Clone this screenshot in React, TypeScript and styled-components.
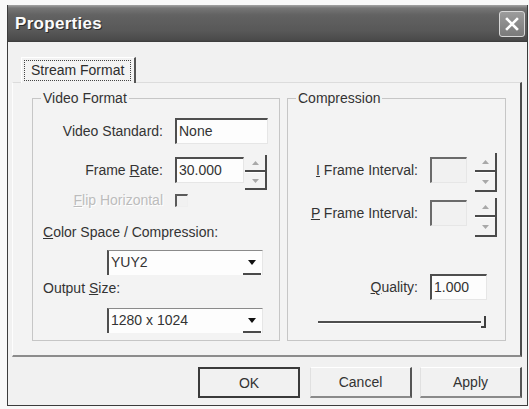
import React from 'react';
import styled, {createGlobalStyle} from 'styled-components';

const GlobalStyle = createGlobalStyle`
  html, body {
    margin: 0;
    padding: 0;
    background: #f8f8f8;
  }
  body {
    font-family: "Liberation Sans", Arial, sans-serif;
    font-size: 14px;
    color: #2e2e2e;
  }
`;

const SpinArrow: React.FC<{up?: boolean}> = ({up}) => (
  <svg width="7" height="4" viewBox="0 0 7 4">
    <path d={up ? 'M0 4 L3.5 0 L7 4 Z' : 'M0 0 L3.5 4 L7 0 Z'} fill="#a8a8a8" />
  </svg>
);

const DropArrow: React.FC = () => (
  <svg width="8" height="5" viewBox="0 0 8 5">
    <path d="M0 0 L8 0 L4 5 Z" fill="#111" />
  </svg>
);

const CloseGlyph: React.FC = () => (
  <svg width="14" height="14" viewBox="0 0 14 14">
    <path d="M2 2 L12 12 M12 2 L2 12" stroke="#fff" strokeWidth="2.6" strokeLinecap="square" />
  </svg>
);

export default function App() {
  return (
    <>
      <GlobalStyle />
      <Window>
        <TitleBar>
          <Title>Properties</Title>
          <CloseButton>
            <CloseGlyph />
          </CloseButton>
        </TitleBar>

        <Body>
          <TabStrip>
            <Tab>
              <FocusRect>Stream Format</FocusRect>
            </Tab>
          </TabStrip>

          <Panel>
            <Group $w={248}>
              <Legend>Video Format</Legend>

              <Row>
                <Label>Video Standard:</Label>
                <TextBox $w={93}>None</TextBox>
              </Row>

              <Row $mt={13}>
                <Label>
                  Frame <u>R</u>ate:
                </Label>
                <Field>
                  <TextBox $w={69}>30.000</TextBox>
                  <Spinner $h={35} $top={-2}>
                    <SpinButton>
                      <SpinArrow up />
                    </SpinButton>
                    <SpinButton $last>
                      <SpinArrow />
                    </SpinButton>
                  </Spinner>
                </Field>
              </Row>

              <Row $mt={9}>
                <Label $disabled>
                  <u>F</u>lip Horizontal
                </Label>
                <CheckBox />
              </Row>

              <PlainLabel $mt={16}>
                <u>C</u>olor Space / Compression:
              </PlainLabel>
              <Combo $mt={10}>
                <ComboText>YUY2</ComboText>
                <DropButton>
                  <DropArrow />
                </DropButton>
              </Combo>

              <PlainLabel $mt={5}>
                Output <u>S</u>ize:
              </PlainLabel>
              <Combo $mt={12}>
                <ComboText>1280 x 1024</ComboText>
                <DropButton>
                  <DropArrow />
                </DropButton>
              </Combo>
            </Group>

            <Group $w={219}>
              <Legend>Compression</Legend>

              <Row $mt={39}>
                <Label>
                  <u>I</u> Frame Interval:
                </Label>
                <Field $gap={8}>
                  <TextBox $w={37} $disabled />
                  <Spinner $h={39} $top={-4}>
                    <SpinButton>
                      <SpinArrow up />
                    </SpinButton>
                    <SpinButton $last>
                      <SpinArrow />
                    </SpinButton>
                  </Spinner>
                </Field>
              </Row>

              <Row $mt={17}>
                <Label>
                  <u>P</u> Frame Interval:
                </Label>
                <Field $gap={8}>
                  <TextBox $w={37} $disabled />
                  <Spinner $h={39} $top={-2}>
                    <SpinButton>
                      <SpinArrow up />
                    </SpinButton>
                    <SpinButton $last>
                      <SpinArrow />
                    </SpinButton>
                  </Spinner>
                </Field>
              </Row>

              <Row $mt={48}>
                <Label>
                  <u>Q</u>uality:
                </Label>
                <TextBox $w={57}>1.000</TextBox>
              </Row>

              <Slider>
                <Track />
                <Thumb />
              </Slider>
            </Group>
          </Panel>

          <ButtonRow>
            <Button $default>OK</Button>
            <Button>Cancel</Button>
            <Button>Apply</Button>
          </ButtonRow>
        </Body>
      </Window>
    </>
  );
}

const Window = styled.div`
  margin: 5px 0 0 7px;
  width: 521px;
  height: 401px;
  box-sizing: border-box;
  display: flex;
  flex-direction: column;
  background: #f1f1f1;
  border-left: 1px solid #3c3c3c;
  border-right: 1px solid #3c3c3c;
  border-bottom: 1px solid #3c3c3c;
`;

const TitleBar = styled.div`
  flex: none;
  height: 37px;
  display: flex;
  align-items: center;
  justify-content: space-between;
  padding: 0 2px 0 7px;
  background: linear-gradient(
    to bottom,
    #a4a4a4 0,
    #767676 3px,
    #626262 10px,
    #585858 26px,
    #4a4a4a 35px,
    #3a3a3a 37px
  );
`;

const Title = styled.span`
  font-family: "Liberation Sans", Arial, sans-serif;
  font-weight: bold;
  font-size: 17px;
  letter-spacing: 0.3px;
  color: #fbfbfb;
  text-shadow: 1px 1px 0 #2a2a2a;
`;

const CloseButton = styled.div`
  width: 26px;
  height: 26px;
  box-sizing: border-box;
  border: 1px solid #d8d8d8;
  border-radius: 3px;
  background: linear-gradient(to bottom, #9c9c9c, #7a7a7a);
  display: flex;
  align-items: center;
  justify-content: center;
`;

const Body = styled.div`
  flex: 1;
  padding: 15px 5px 0 4px;
`;

const TabStrip = styled.div`
  display: flex;
  padding-left: 9px;
`;

const Tab = styled.div`
  position: relative;
  z-index: 1;
  margin-bottom: -1px;
  height: 26px;
  box-sizing: border-box;
  padding: 2px 3px 2px 2px;
  background: #f3f3f3;
  border-top: 1px solid #fff;
  border-left: 1px solid #fff;
  border-right: 2px solid #555;
`;

const FocusRect = styled.div`
  height: 21px;
  box-sizing: border-box;
  padding: 0 6px;
  line-height: 19px;
  border: 1px dotted #444;
`;

const Panel = styled.div`
  height: 275px;
  box-sizing: border-box;
  display: flex;
  gap: 7px;
  padding: 7px 14px 14px 19px;
  background: #f3f3f3;
  border-top: 1px solid #dcdcdc;
  border-left: 1px solid #fdfdfd;
  border-right: 2px solid #4c4c4c;
  border-bottom: 2px solid #8c8c8c;
`;

const Group = styled.fieldset<{$w: number}>`
  flex: none;
  width: ${(p) => p.$w}px;
  min-width: 0;
  margin: 0;
  padding: 12px 0 0 0;
  box-sizing: border-box;
  border: 1px solid #c6c6c6;
  display: flex;
  flex-direction: column;
`;

const Legend = styled.legend`
  margin-left: 8px;
  padding: 0 2px;
  line-height: 16px;
  color: #333;
`;

const Row = styled.div<{$mt?: number}>`
  display: grid;
  grid-template-columns: 130px auto;
  column-gap: 12px;
  align-items: center;
  justify-items: start;
  margin-top: ${(p) => p.$mt ?? 0}px;
`;

const Label = styled.span<{$disabled?: boolean}>`
  justify-self: end;
  line-height: 16px;
  white-space: nowrap;
  color: ${(p) => (p.$disabled ? '#bcbcbc' : '#333')};
  text-shadow: ${(p) => (p.$disabled ? '1px 1px 0 #fff' : 'none')};
`;

const PlainLabel = styled.span<{$mt: number}>`
  margin-top: ${(p) => p.$mt}px;
  padding-left: 10px;
  line-height: 16px;
  white-space: nowrap;
  color: #333;
`;

const Field = styled.div<{$gap?: number}>`
  display: flex;
  align-items: flex-start;
  gap: ${(p) => p.$gap ?? 1}px;
`;

const TextBox = styled.div<{$w: number; $disabled?: boolean}>`
  width: ${(p) => p.$w}px;
  height: 26px;
  box-sizing: border-box;
  padding-left: 2px;
  line-height: 23px;
  white-space: nowrap;
  background: ${(p) => (p.$disabled ? '#f1f1f1' : '#fdfdfd')};
  border-top: 2px solid ${(p) => (p.$disabled ? '#6a6a6a' : '#4e4e4e')};
  border-left: 2px solid ${(p) => (p.$disabled ? '#6a6a6a' : '#4e4e4e')};
  border-right: 1px solid #e6e6e6;
  border-bottom: 1px solid #e6e6e6;
  color: #333;
`;

const Spinner = styled.div<{$h: number; $top: number}>`
  width: 22px;
  height: ${(p) => p.$h}px;
  margin-top: ${(p) => p.$top}px;
  margin-bottom: ${(p) => 26 - p.$h - p.$top}px;
  box-sizing: border-box;
  display: flex;
  flex-direction: column;
  border-right: 2px solid #4a4a4a;
`;

const SpinButton = styled.div<{$last?: boolean}>`
  flex: 1;
  display: flex;
  align-items: center;
  justify-content: center;
  border-bottom: 2px solid #4a4a4a;
  border-top: ${(p) => (p.$last ? '1px solid #fff' : 'none')};
`;

const CheckBox = styled.div`
  width: 13px;
  height: 13px;
  box-sizing: border-box;
  border-top: 2px solid #5a5a5a;
  border-left: 2px solid #5a5a5a;
  border-right: 1px solid #efefef;
  border-bottom: 1px solid #efefef;
  background: #f1f1f1;
`;

const Combo = styled.div<{$mt: number}>`
  margin-top: ${(p) => p.$mt}px;
  margin-left: 74px;
  width: 156px;
  height: 25px;
  box-sizing: border-box;
  display: flex;
  background: #fdfdfd;
  border-top: 1px solid #8a8a8a;
  border-left: 2px solid #4e4e4e;
  border-right: 1px solid #e6e6e6;
`;

const ComboText = styled.span`
  flex: 1;
  padding-left: 2px;
  line-height: 23px;
  color: #333;
`;

const DropButton = styled.div`
  width: 18px;
  margin-right: 1px;
  display: flex;
  align-items: center;
  justify-content: center;
  border-bottom: 2px solid #4a4a4a;
`;

const Slider = styled.div`
  margin: 14px 0 0 30px;
  width: 168px;
  height: 14px;
  display: flex;
  align-items: flex-end;
`;

const Track = styled.div`
  flex: 1;
  height: 2px;
  margin-bottom: 4px;
  background: #4e4e4e;
  border-bottom: 1px solid #fff;
`;

const Thumb = styled.div`
  width: 5px;
  height: 12px;
  box-sizing: border-box;
  border-right: 2px solid #3e3e3e;
  border-bottom: 2px solid #3e3e3e;
`;

const ButtonRow = styled.div`
  display: flex;
  justify-content: flex-end;
  gap: 8px;
  margin-top: 10px;
`;

const Button = styled.div<{$default?: boolean}>`
  width: 102px;
  height: 31px;
  box-sizing: border-box;
  margin-right: ${(p) => (p.$default ? 2 : 0)}px;
  display: flex;
  align-items: center;
  justify-content: center;
  font-family: "Liberation Sans", Arial, sans-serif;
  font-size: 14px;
  color: #333;
  background: #f1f1f1;
  border-top: ${(p) => (p.$default ? '2px solid #3a3a3a' : '1px solid #fff')};
  border-left: ${(p) => (p.$default ? '2px solid #3a3a3a' : '1px solid #e0e0e0')};
  border-right: ${(p) => (p.$default ? '2px solid #3a3a3a' : '2px solid #555')};
  border-bottom: ${(p) => (p.$default ? '2px solid #3a3a3a' : '2px solid #8a8a8a')};
`;
